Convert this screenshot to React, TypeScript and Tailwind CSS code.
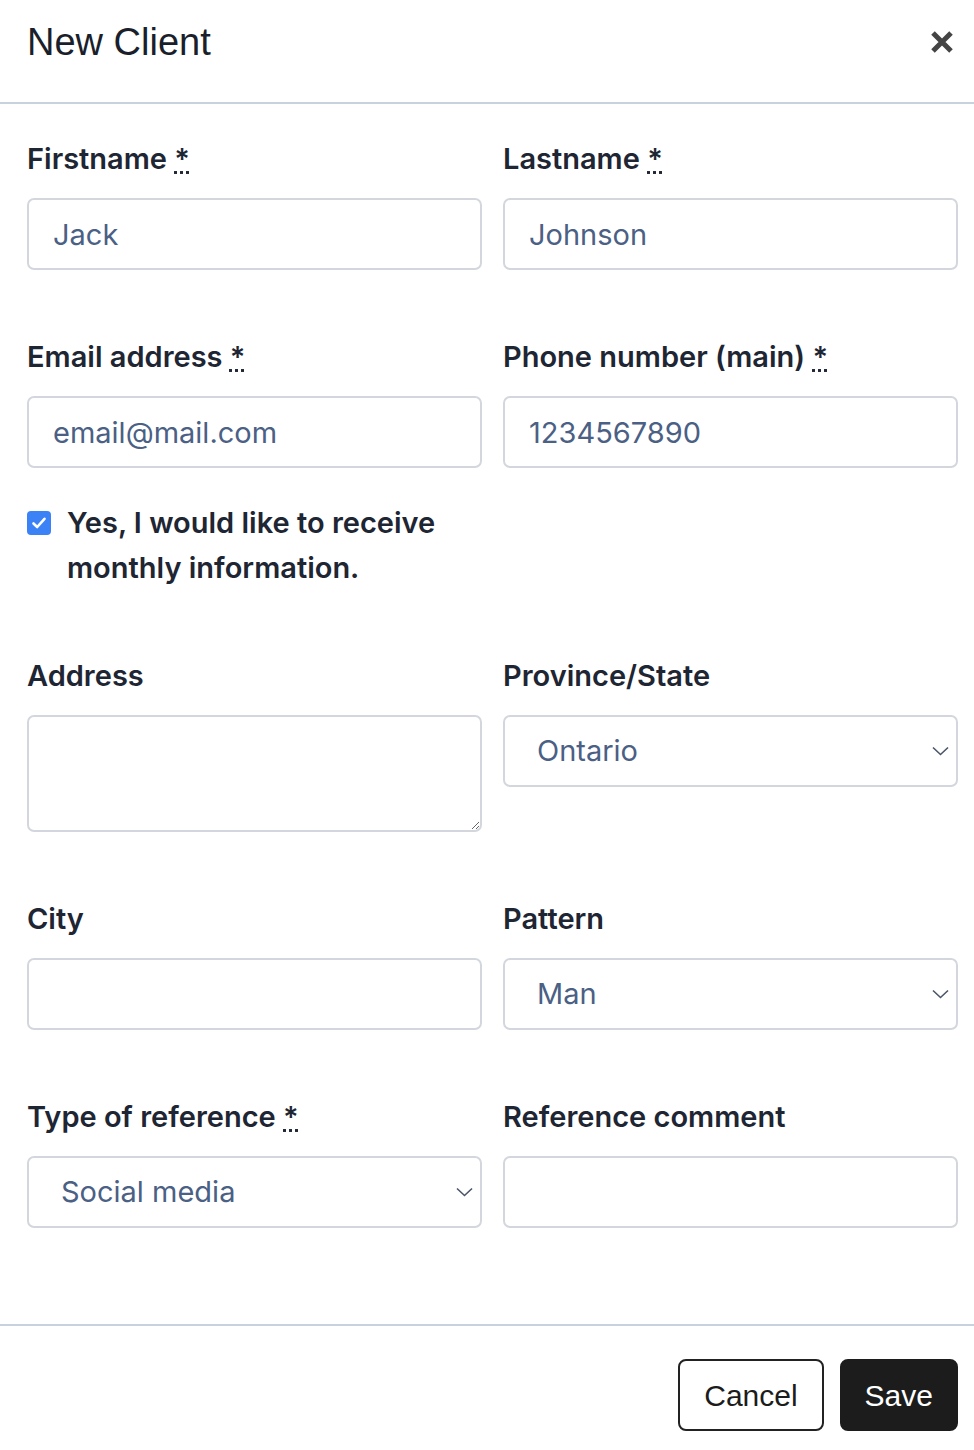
import React from "react";

const inter = { fontFamily: "Inter, 'Noto Sans', sans-serif" };

function Req() {
  return (
    <abbr title="required" className="cursor-help">
      *
    </abbr>
  );
}

function Label({ children }: { children: React.ReactNode }) {
  return (
    <label className="block text-[29px] leading-[40px] font-semibold text-[#1e2533] mb-[19px]">
      {children}
    </label>
  );
}

function TextInput({ value }: { value?: string }) {
  return (
    <input
      type="text"
      defaultValue={value}
      className="block w-full h-[72px] border-2 border-[#d3d7dd] rounded-[7px] px-[24px] text-[29px] text-[#4a6084] bg-white outline-none"
      style={inter}
    />
  );
}

function Select({ value, options }: { value: string; options: string[] }) {
  return (
    <div className="relative">
      <select
        defaultValue={value}
        className="block w-full h-[72px] border-2 border-[#d3d7dd] rounded-[7px] pl-[32px] pr-[40px] text-[29px] text-[#4a6084] bg-white appearance-none outline-none"
        style={inter}
      >
        {options.map((o) => (
          <option key={o}>{o}</option>
        ))}
      </select>
      <svg
        className="absolute right-[9px] top-1/2 -translate-y-1/2 pointer-events-none"
        width="17"
        height="10"
        viewBox="0 0 17 10"
        fill="none"
      >
        <path d="M1 1.5L8.5 8.5L16 1.5" stroke="#4a5568" strokeWidth="1.6" />
      </svg>
    </div>
  );
}

export default function App() {
  return (
    <div className="w-[974px] min-h-[1450px] bg-white" style={inter}>
      {/* Header */}
      <div className="h-[104px] flex items-center justify-between pl-[27px] pr-[19px] pb-[18px] border-b-2 border-[#c8d2de]">
        <h1
          className="text-[38px] leading-none text-[#1a1f2b] font-normal"
          style={{ fontFamily: "'Liberation Sans', Arial, sans-serif" }}
        >
          New Client
        </h1>
        <button className="w-[26px] h-[26px] flex items-center justify-center" aria-label="Close">
          <svg width="24" height="24" viewBox="0 0 24 24">
            <path d="M3 3L21 21M21 3L3 21" stroke="#444" strokeWidth="5" strokeLinecap="butt" />
          </svg>
        </button>
      </div>

      {/* Body */}
      <div className="pl-[27px] pr-[16px] pt-[35px] pb-[96px] border-b-2 border-[#c8d2de]">
        <div className="grid grid-cols-2 gap-x-[21px]">
          <div>
            <Label>
              Firstname <Req />
            </Label>
            <TextInput value="Jack" />
          </div>
          <div>
            <Label>
              Lastname <Req />
            </Label>
            <TextInput value="Johnson" />
          </div>

          <div className="mt-[67px]">
            <Label>
              Email address <Req />
            </Label>
            <TextInput value="email@mail.com" />
          </div>
          <div className="mt-[67px]">
            <Label>
              Phone number (main) <Req />
            </Label>
            <TextInput value="1234567890" />
          </div>

          <div className="mt-[32px] flex items-start gap-[16px]">
            <div className="mt-[11px] w-[24px] h-[24px] rounded-[4px] bg-[#3b82f6] flex items-center justify-center shrink-0">
              <svg width="16" height="16" viewBox="0 0 16 16" fill="none">
                <path d="M2.5 8.5L6.2 12L13.5 3.8" stroke="white" strokeWidth="2.6" strokeLinecap="round" strokeLinejoin="round" />
              </svg>
            </div>
            <span className="text-[29px] leading-[45px] font-semibold text-[#1e2533]">
              Yes, I would like to receive monthly information.
            </span>
          </div>
          <div></div>

          <div className="mt-[66px]">
            <Label>Address</Label>
            <textarea
              className="block w-full h-[117px] border-2 border-[#d3d7dd] rounded-[7px] px-[24px] py-[12px] text-[29px] text-[#4a6084] bg-white outline-none resize-y"
              style={inter}
            />
          </div>
          <div className="mt-[66px]">
            <Label>Province/State</Label>
            <Select value="Ontario" options={["Ontario", "Quebec", "British Columbia", "Alberta"]} />
          </div>

          <div className="mt-[67px]">
            <Label>City</Label>
            <TextInput />
          </div>
          <div className="mt-[67px]">
            <Label>Pattern</Label>
            <Select value="Man" options={["Man", "Woman", "Other"]} />
          </div>

          <div className="mt-[67px]">
            <Label>
              Type of reference <Req />
            </Label>
            <Select value="Social media" options={["Social media", "Friend", "Website", "Other"]} />
          </div>
          <div className="mt-[67px]">
            <Label>Reference comment</Label>
            <TextInput />
          </div>
        </div>
      </div>

      {/* Footer */}
      <div className="flex justify-end gap-[16px] pt-[33px] pb-[18px] pr-[16px]">
        <button
          className="h-[72px] px-[24px] border-2 border-[#222] rounded-[8px] bg-white text-[30px] text-[#1c1c1c]"
          style={{ fontFamily: "'Liberation Sans', Arial, sans-serif" }}
        >
          Cancel
        </button>
        <button
          className="h-[72px] px-[23px] border-2 border-[#1c1c1c] rounded-[8px] bg-[#1c1c1c] text-[30px] text-white"
          style={{ fontFamily: "'Liberation Sans', Arial, sans-serif" }}
        >
          Save
        </button>
      </div>
    </div>
  );
}
